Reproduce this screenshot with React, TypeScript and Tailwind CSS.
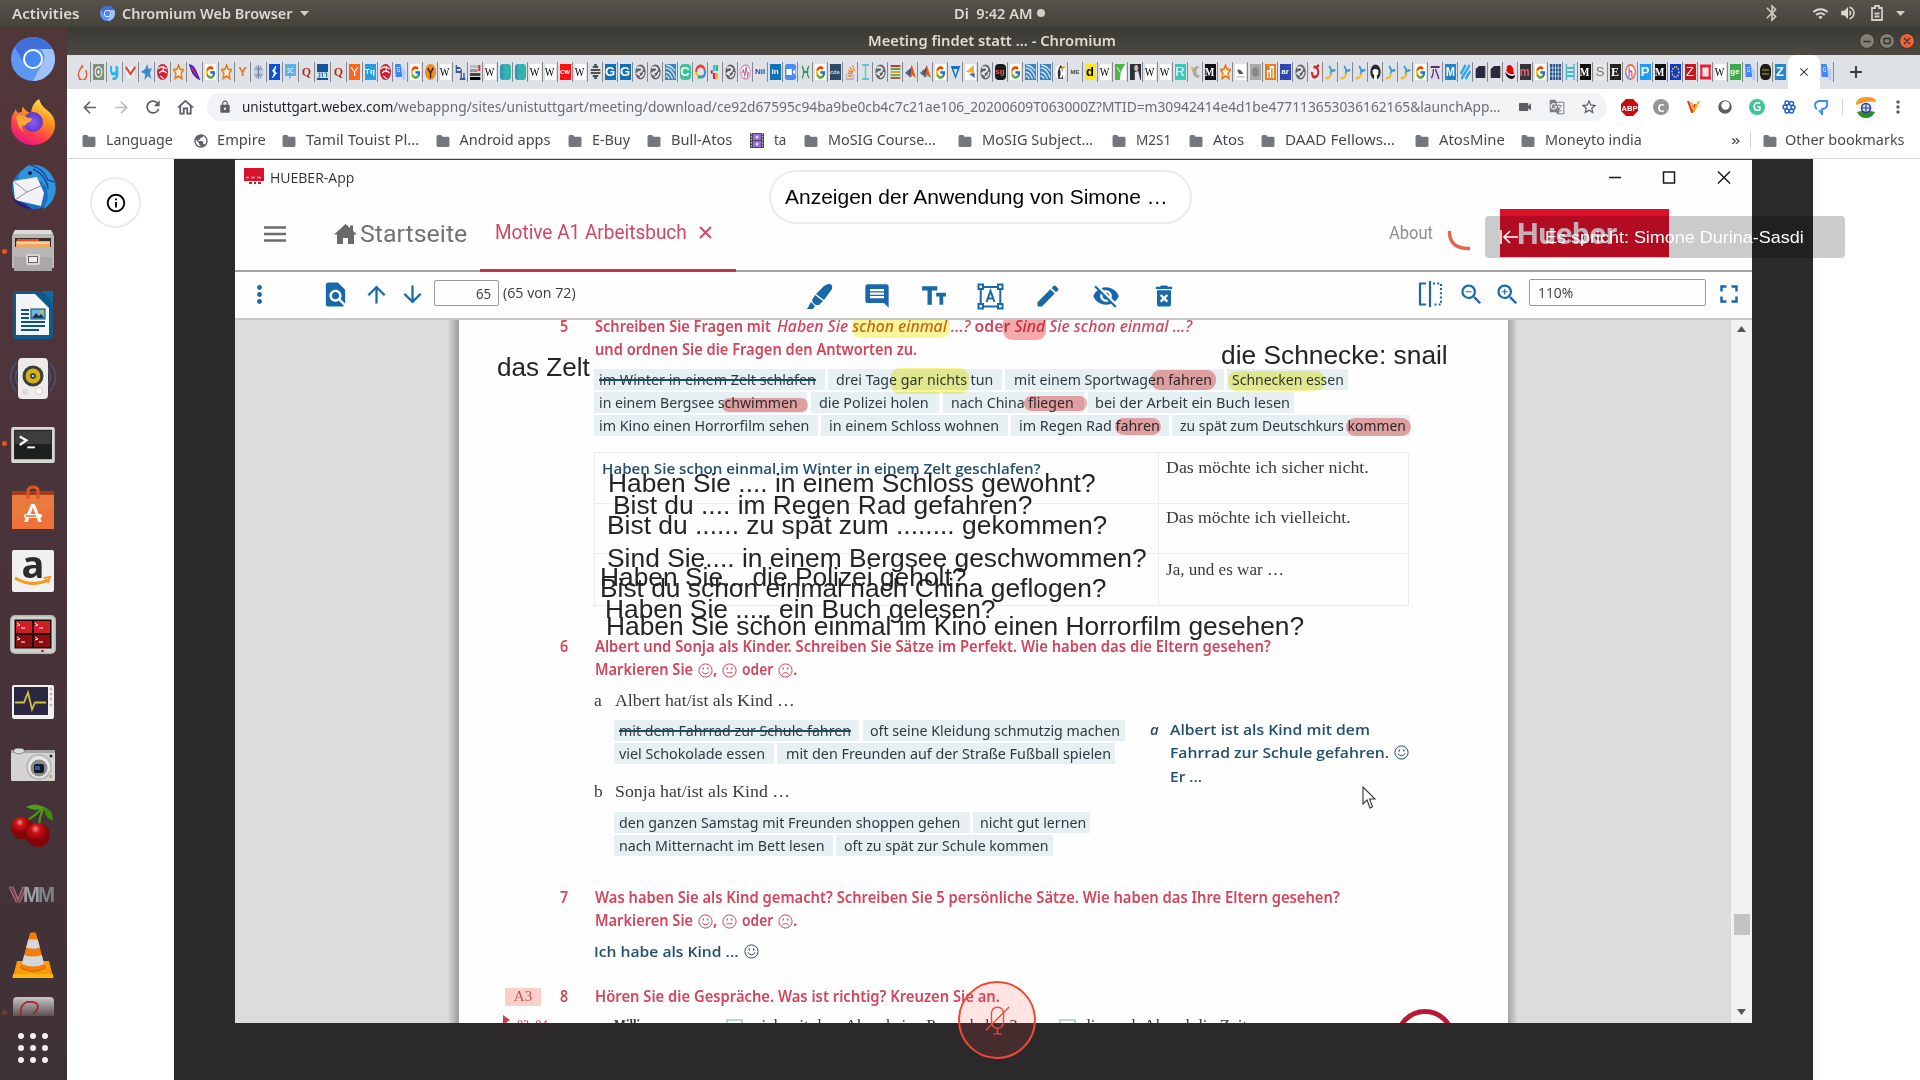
import React, { useLayoutEffect, useRef, useState } from "react";
import {
  MdArrowBack,
  MdArrowForward,
  MdRefresh,
  MdOutlineHome,
  MdLock,
  MdVideocam,
  MdGTranslate,
  MdStarBorder,
  MdMoreVert,
  MdPublic,
  MdFindInPage,
  MdArrowUpward,
  MdArrowDownward,
  MdInsertComment,
  MdEdit,
  MdVisibilityOff,
  MdDeleteForever,
  MdZoomIn,
  MdZoomOut,
  MdFullscreen,
  MdBluetooth,
  MdWifi,
  MdVolumeUp,
  MdInfoOutline,
  MdClose,
} from "react-icons/md";
import { FcGoogle } from "react-icons/fc";

/* Text stretched horizontally so that it fills exactly `w` pixels. */
function Fit({ w, className = "", children }: { w: number; className?: string; children: React.ReactNode }) {
  const ref = useRef<HTMLSpanElement>(null);
  const [k, setK] = useState(1);
  useLayoutEffect(() => {
    if (ref.current) setK(w / ref.current.offsetWidth);
  }, [w]);
  return (
    <span className={`inline-block shrink-0 whitespace-pre ${className}`} style={{ width: w }}>
      <span ref={ref} className="inline-block origin-left whitespace-pre" style={{ transform: `scaleX(${k})` }}>
        {children}
      </span>
    </span>
  );
}

/* ---------- browser tabs ---------- */

const fav: Record<string, React.ReactNode> = {
  torch: <path d="M8 1L4 6a6 6 0 1 0 8.5.3M8 1v3" fill="none" stroke="#ee5a35" strokeWidth="2" />,
  spiral: (<g><rect width="16" height="16" fill="#7f9078" /><circle cx="8" cy="8" r="5" fill="none" stroke="#e9eee4" strokeWidth="1.6" /><circle cx="8" cy="8" r="2" fill="#e9eee4" /></g>),
  ycy: <path d="M3 2v4q0 4 4 4t4-4V2M12 3v7q0 5-7 5" fill="none" stroke="#2ab6ea" strokeWidth="3" />,
  gmail: (<g><rect y="3" width="16" height="11" fill="#eceff1" /><path d="M1 14V4l7 6 7-6v10" fill="none" stroke="#e8c8c5" strokeWidth="1.500" /><path d="M1 3l7 7 7-7" fill="none" stroke="#d9483b" strokeWidth="2.600" /></g>),
  bstar: <path d="M9 0l2 5 5-1-3 5 2 6-5-3-5 4 1-6-6-2 6-3z" fill="#3a8bd6" />,
  redball: (<g><circle cx="8" cy="8" r="8" fill="#d61f35" /><path d="M1 5q6-4 13 0M3 9q5-4 11 0M5 12l5 3M9 2v6" fill="none" stroke="#fff" strokeWidth="1.4" /></g>),
  ostar: <path d="M8 1l2.2 4.2 5 .4-3.400 3.700 1.200 5.200L8 12l-5 2.500 1.200-5.200L.8 5.600l5-.4z" fill="#fff3e0" stroke="#ea7c1c" strokeWidth="2" />,
  feather: <path d="M1 1q6 1 9 6l5 8q-8-3-11-8z" fill="#d01870" stroke="#3b22c8" strokeWidth="1.5" />,
  greyball: (<g><circle cx="8" cy="8" r="7" fill="#c7cede" /><path d="M2 5h12M2 11h12M8 1v14M4 2q8 6 0 12M12 2q-8 6 0 12" fill="none" stroke="#6f82a8" strokeWidth="1" /></g>),
  bdiamond: (<g><rect width="16" height="16" fill="#0d4fd6" /><path d="M10 2L5 7l3 2-3 5 6-5-3-2z" fill="#fff" stroke="#fff" strokeWidth="1" /></g>),
  sobub: (<g><path d="M0 0h16v12H9l-3 4v-4H0z" fill="#5fb2e6" /><text x="8" y="9" fontSize="8" textAnchor="middle" fill="#fff">SC</text></g>),
  spar: (<g><rect width="16" height="16" fill="#11579c" /><rect y="8" width="16" height="6" fill="#cfe0f0" /><path d="M2 9h2v4H2M6 9h2v4M11 9h3v4" stroke="#11579c" fill="none" /></g>),
  trans: (<g><path d="M0 0h8l4 13H1z" fill="#4285f4" /><path d="M9 5h6v11h-4z" fill="#b9cdf2" /><text x="5" y="8" fontSize="7" textAnchor="middle" fill="#fff">G</text></g>),
  oface: (<g><circle cx="8" cy="8" r="8" fill="#ef8a24" /><path d="M4 4l4 5 4-5M8 9v5" fill="none" stroke="#222" strokeWidth="2" /></g>),
  blue2: (<g><path d="M2 1v7h6M2 4h6M9 5v10M13 9v6M7 15h8" fill="none" stroke="#335b99" strokeWidth="2" /></g>),
  stack: (<g><rect y="1" width="15" height="3" fill="#bbb" /><rect y="5" width="11" height="3" fill="#999" /><rect y="9" width="15" height="3" fill="#444" /><rect y="13" width="15" height="3" fill="#000" /><rect x="12" y="1" width="3" height="6" fill="#e33" /></g>),
  teal: (<g><rect width="8" height="16" rx="4" fill="#2d96c9" /><rect x="4" width="12" height="16" rx="4" fill="#34b4a8" /></g>),
  print: <path d="M4 3h8M1 6h14M1 9h14M4 12h8M6 14h4M6 1h4" stroke="#222" strokeWidth="1.6" />,
  globe: (<g><circle cx="8" cy="8" r="7.500" fill="#60646a" /><path d="M3 4q5-2 8 1-2 4-7 3M13 8q-1 5-6 5M2 9l5 2" fill="none" stroke="#e8eaed" strokeWidth="2" /></g>),
  wave: (<g><rect width="16" height="16" fill="#3c83c6" /><path d="M1 4q9 0 14 10M1 8q6 0 10 7M2 1q8 1 13 6M1 12q4 0 5 3" fill="none" stroke="#d8e9f8" strokeWidth="1.500" /></g>),
  cloud: (<g><path d="M2 8a6 5 0 0 1 12-2" fill="none" stroke="#ea4335" strokeWidth="3" /><path d="M14 6q2 6-4 7" fill="none" stroke="#4285f4" strokeWidth="3" /><path d="M10 13H4" stroke="#34a853" strokeWidth="3" /><path d="M3 12L2 8" stroke="#fbbc05" strokeWidth="3" /></g>),
  slack: (<g><path d="M6 1v6" stroke="#36c5f0" strokeWidth="3.500" /><path d="M10 1v6" stroke="#2eb67d" strokeWidth="3.500" /><path d="M10 9v6" stroke="#ecb22e" strokeWidth="3.500" /><path d="M6 9v6M1 8h3" stroke="#e01e5a" strokeWidth="3.500" /></g>),
  pink: (<g><circle cx="8" cy="8" r="7" fill="#fff" stroke="#d48cb0" strokeWidth="1.500" /><path d="M3 9l2-3 2 6 2-9 2 9 2-4" fill="none" stroke="#c2679a" strokeWidth="1.500" /></g>),
  zoom: (<g><rect width="16" height="16" rx="3" fill="#4a8cff" /><path d="M2 5h8v6H2zM11 8l4-3v6z" fill="#fff" /></g>),
  dna: <path d="M3 2q5 6 0 12M13 2q-5 6 0 12M4 8h8" fill="none" stroke="#3f9a52" strokeWidth="2" />,
  so: (<g><path d="M2 10v5h10v-5" fill="none" stroke="#aaa" strokeWidth="1.500" /><path d="M4 12h6M4 9l6 1M5 6l6 3M7 3l5 5M11 1l3 6" stroke="#f08026" strokeWidth="1.500" /></g>),
  lines: <g><path d="M1 2h14" stroke="#c33" strokeWidth="2" /><path d="M1 5h14" stroke="#4a5" strokeWidth="2" /><path d="M1 8h14" stroke="#e8a030" strokeWidth="2" /><path d="M1 11h14" stroke="#7a5" strokeWidth="2" /><path d="M1 14h14" stroke="#963" strokeWidth="2" /></g>,
  matlab: (<g><path d="M0 9l6-4 4 8-3 0z" fill="#2878b8" /><path d="M10 1l6 13-6-3-4 3z" fill="#dd5d1c" /><path d="M10 1l-4 6 1 5z" fill="#7a2010" /></g>),
  vblue: <path d="M1 2h14L8 15zM5 5h6l-3 6z" fill="#1971c2" fillRule="evenodd" />,
  otri: (<g><rect width="16" height="16" fill="#fff" /><path d="M1 8l12-7v8z" fill="#f4a640" /><path d="M6 10l8 4V9z" fill="#3b69b0" /></g>),
  peng: (<g><circle cx="8" cy="8" r="7.500" fill="#fff" /><path d="M5 15q-3-8 3-14 5 2 2 8l2 6" fill="#333" /><path d="M8 4q3 6 0 10" stroke="#fff" strokeWidth="2.500" fill="none" /><path d="M10 4l4-1" stroke="#e90" strokeWidth="2" /></g>),
  leaf: (<g><rect width="16" height="16" fill="#4eb648" /><path d="M8 16Q8 6 16 0v16zM3 3l5 6" fill="#fff" stroke="#fff" /></g>),
  photo: (<g><rect width="16" height="16" fill="#2c2f3a" /><circle cx="9" cy="4" r="3" fill="#d9b59a" /><path d="M7 16V8l5-1 3 9z" fill="#dfe3ea" /></g>),
  kite: (<g><path d="M1 2l7 3-2 8z" fill="#f0a830" /><path d="M14 3a6 6 0 1 0 1 9l-5-2q-2-5 4-7z" fill="#aaa" /></g>),
  bird: (<g><rect width="16" height="16" fill="#fff" /><path d="M3 6q5-2 9 4l-6 0z" fill="#555" /><path d="M2 13h12" stroke="#999" /></g>),
  blur: (<g><rect width="16" height="16" fill="#aaa" /><circle cx="8" cy="8" r="5" fill="#888" /></g>),
  obars: (<g><rect width="16" height="16" fill="#f17c12" /><path d="M4 14V7h4v7M8 7V3h4v11" fill="none" stroke="#fff" strokeWidth="2" /></g>),
  redo: (<g><rect width="16" height="16" fill="#fff" opacity=".3" /><path d="M5 3h2a5 5 0 0 1 0 10H5a4 5 0 0 1-2-5M10 3l3-2" fill="none" stroke="#e0202f" strokeWidth="3" /></g>),
  run: (<g><path d="M6 2l4 5 5-1M9 6l-1 4" stroke="#35a0d8" strokeWidth="2.500" fill="none" /><path d="M1 14q6 1 9-5" stroke="#f4b92c" strokeWidth="2.500" fill="none" /></g>),
  cat: (<g><circle cx="8" cy="8" r="7.500" fill="#24292e" /><path d="M4 6q4-2 8 0 1 6-2 5v5H6v-5Q3 10 4 6z" fill="#fff" /></g>),
  pi: (<g><rect width="16" height="16" fill="#dde" /><path d="M1 3h13M5 5q0 6-3 9M8 5l5 10" stroke="#536" strokeWidth="1.800" fill="none" /></g>),
  stripes: <path d="M1 10L8 1M2 15L14 1M8 15l7-8" stroke="#2aa5ee" strokeWidth="3" />,
  folder: <path d="M1 5l5-3h9v12H1z" fill="#2e2740" />,
  hat: (<g><path d="M3 2q6-3 9 3l1 5q-7 1-11-3z" fill="#e00" /><path d="M0 8q8 6 15 3-1 4-6 4-7-1-9-7z" fill="#111" /></g>),
  grid: (<g><rect width="16" height="16" fill="#27528c" /><path d="M0 4h16M0 8h16M0 12h16M4 0v16M8 0v16M12 0v16" stroke="#c9d7ea" strokeWidth="1" /></g>),
  ladder: <path d="M2 0v16M13 0v16M2 4h11M2 8h11M2 12h11" stroke="#41b8cb" strokeWidth="2" />,
  hcol: (<g><circle cx="8" cy="8" r="7" fill="#fff" stroke="#ee6a3c" strokeWidth="1.800" /><path d="M1 8a7 7 0 0 0 7 7" stroke="#5aa8dd" strokeWidth="2" fill="none" /><path d="M6 4v9M6 8q4-2 4 1v4" stroke="#e0529c" strokeWidth="2" fill="none" /></g>),
  eu: (<g><rect width="16" height="16" fill="#1236d8" /><circle cx="8" cy="8" r="5" fill="none" stroke="#ffe21a" strokeWidth="2" strokeDasharray="1.500 1.500" /></g>),
  redbar: (<g><rect width="16" height="16" fill="#f6dfe2" /><path d="M0 2h16M0 14h16M2 2v12M14 2v12" stroke="#dd2338" strokeWidth="3" /></g>),
  blackr: (<g><rect width="16" height="16" rx="6" fill="#1d1d1b" /><path d="M3 6h10M3 10h10" stroke="#8a7b2a" strokeWidth="1.500" /></g>),
  istar: <path d="M3 1h10M8 1v14M3 15h10" stroke="#5ec7d2" strokeWidth="2" fill="none" />,
};

type Letter = [string, string, string];
const letters: Record<string, Letter> = {
  W: ["W", "bg-white text-black", "serif"],
  Q: ["Q", "text-[#b0301f] font-bold", "serif"],
  Yo: ["Y", "text-[#f2731d] font-bold", "sans"],
  Yb: ["Y", "bg-[#fb651e] text-white", "sans"],
  Tq: ["Tq", "bg-[#26a0e2] text-white font-bold", "small"],
  CW: ["CW", "bg-[#f11] text-white font-bold", "tiny"],
  Gb: ["G", "bg-[#1470b5] text-white font-bold", "sans"],
  C: ["C", "bg-[#3fc49a] text-white font-bold rounded-sm", "sans"],
  Nil: ["Nil", "text-[#1c54a0] font-bold", "small"],
  in: ["in", "bg-[#0a74b6] text-white font-bold", "small"],
  cds: ["cds", "bg-[#2c4a68] text-white", "tiny"],
  sg: ["sg", "bg-[#1c1c1c] text-[#f55] font-bold rounded-sm", "small"],
  ME: ["ME", "text-[#444] font-bold", "tiny"],
  d: ["d", "bg-[#fde81a] text-black font-bold", "sans"],
  R: ["R", "bg-[#3cc8b4] text-white", "sans"],
  M: ["M", "bg-[#111] text-white font-bold", "serif"],
  ar: ["ar", "bg-[#2c47b0] text-white font-bold", "small"],
  Mb: ["M", "bg-[#2384cc] text-white font-bold", "sans"],
  m: ["m", "bg-[#33333b] text-[#f0606c] font-bold", "sans"],
  S: ["S", "bg-[#e6e6e6] text-[#777]", "sans"],
  E: ["E", "bg-[#222] text-white font-bold", "serif"],
  P: ["P", "bg-[#1f9bf5] text-white font-bold", "sans"],
  Zr: ["Z", "bg-[#c9151b] text-white", "sans"],
  ge: ["ge", "bg-[#3cab44] text-white font-bold", "small"],
  Zb: ["Z", "bg-[#2787cc] text-white font-bold", "sans"],
};

const tabs =
  "torch spiral ycy gmail bstar redball ostar feather G ostar Yo greyball bdiamond sobub Q spar Q Yb Tq redball trans G oface W blue2 stack W teal teal W W CW W print Gb Gb globe globe wave C cloud slack globe pink Nil in zoom dna G cds so istar globe lines matlab matlab G vblue otri globe sg G wave wave peng ME d W leaf photo W W R kite M ostar bird blur obars ar globe redo run run run cat run run G pi Mb stripes folder folder hat m G grid ladder M S E hcol P M eu Zr redbar W ge trans blackr Zb".split(" ");

function Favicon({ k }: { k: string }) {
  if (k === "G")
    return (
      <span className="flex h-4 w-[11px] items-center justify-center overflow-hidden bg-white">
        <FcGoogle className="h-[15px] w-[11px]" preserveAspectRatio="none" />
      </span>
    );
  if (letters[k]) {
    const [t, c, f] = letters[k];
    const font =
      f === "serif"
        ? "font-['Liberation_Serif',serif] text-[12px] leading-4"
        : f === "tiny"
          ? "font-['Liberation_Sans',sans-serif] text-[6px] leading-4"
          : f === "small"
            ? "font-['Liberation_Sans',sans-serif] text-[8px] leading-4"
            : "font-['Liberation_Sans',sans-serif] text-[13px] leading-4";
    return (
      <span className={`flex h-4 w-[11px] items-center justify-center ${c} ${font}`}>
        <span className={t === "W" || t === "M" || t === "m" ? "scale-x-85" : ""}>{t}</span>
      </span>
    );
  }
  return (
    <svg className="h-4 w-[11px]" viewBox="0 0 16 16" preserveAspectRatio="none">
      {fav[k]}
    </svg>
  );
}

function TabStrip() {
  return (
    <div className="flex h-[34px] items-center bg-[#dee1e6] pl-[8px]">
      {tabs.map((k, i) => (
        <div
          key={i}
          className={`flex h-5 shrink-0 items-center justify-center border-r ${i < 18 ? "w-4" : "w-[15px]"} ${i === tabs.length - 1 ? "border-transparent" : "border-[#85888d]"}`}
        >
          <Favicon k={k} />
        </div>
      ))}
      <div className="flex h-full w-[32px] shrink-0 items-center justify-center rounded-t-lg bg-white">
        <MdClose className="size-[14px] text-[#3c4043]" />
      </div>
      <div className="flex h-5 w-[14px] items-center justify-center border-r border-[#85888d]">
        <Favicon k="trans" />
      </div>
      <svg className="ml-[15px] size-[14px]" viewBox="0 0 14 14">
        <path d="M7 1v12M1 7h12" stroke="#3c4043" strokeWidth="2" />
      </svg>
    </div>
  );
}

function ChromiumLogo({ className = "" }: { className?: string }) {
  return (
    <svg className={className} viewBox="0 0 44 44">
      <circle cx="22" cy="22" r="22" fill="#5e97f6" />
      <path d="M3.500 10A22 22 0 0 1 41.500 12H22a10 10 0 0 0-9 14z" fill="#3f6fd8" />
      <path d="M41.500 12A22 22 0 0 1 22 44l9-17a10 10 0 0 0-2-15z" fill="#a1c2fa" />
      <circle cx="22" cy="22" r="10" fill="#fff" />
      <circle cx="22" cy="22" r="8" fill="#4688f1" />
    </svg>
  );
}

/* ---------- toolbar ---------- */

function Slot({ children }: { children: React.ReactNode }) {
  return <div className="flex w-8 shrink-0 items-center justify-center">{children}</div>;
}

function AddressRow() {
  return (
    <div className="flex h-9 items-center bg-white pl-[6px] text-[#5a5d61]">
      <Slot><MdArrowBack className="size-[19px]" /></Slot>
      <Slot><MdArrowForward className="size-[19px] text-[#b9babc]" /></Slot>
      <Slot><MdRefresh className="size-[20px]" /></Slot>
      <Slot><MdOutlineHome className="size-[21px]" /></Slot>
      <div className="ml-[6px] flex h-7 w-[1400px] items-center rounded-full bg-[#f1f3f4] pl-[11px]">
        <MdLock className="size-[14px]" />
        <div className="mb-[2px] ml-[10px] flex text-[15px]">
          <Fit w={151} className="text-[#1f2124]">unistuttgart.webex.com</Fit>
          <Fit w={1107} className="text-[#6a6d71]">/webappng/sites/unistuttgart/meeting/download/ce92d67595c94ba9be0cb4c7c21ae106_20200609T063000Z?MTID=m30942414e4d1be477113653036162165&amp;launchApp…</Fit>
        </div>
        <div className="ml-[9px] flex">
          <Slot><MdVideocam className="size-[16px]" /></Slot>
          <Slot><MdGTranslate className="size-[16px] text-[#7b7e82]" /></Slot>
          <Slot><MdStarBorder className="size-[18px]" /></Slot>
        </div>
      </div>
      <div className="ml-[6px] flex items-center">
        <Slot>
          <svg className="size-[17px]" viewBox="0 0 17 17">
            <path d="M5 0h7l5 5v7l-5 5H5l-5-5V5z" fill="#c70d0d" />
            <text x="8.500" y="11.500" fontSize="7.500" fontWeight="bold" textAnchor="middle" fill="#fff" fontFamily="Liberation Sans">ABP</text>
          </svg>
        </Slot>
        <Slot><span className="flex size-[16px] items-center justify-center rounded-full bg-[#959595] text-[11px] font-bold leading-none text-white">C</span></Slot>
        <Slot>
          <svg className="h-[12px] w-[13px]" viewBox="0 0 13 12"><path d="M1 0l4 11L8 3" fill="none" stroke="#d8342a" strokeWidth="2" /><path d="M4 1l3 9 5-10" fill="none" stroke="#f2a922" strokeWidth="2" /></svg>
        </Slot>
        <Slot>
          <svg className="size-[14px]" viewBox="0 0 14 14"><circle cx="7" cy="7" r="6" fill="#5c5e60" stroke="#5c5e60" strokeWidth="1.500" /><circle cx="7.500" cy="5.500" r="4.200" fill="#fff" /></svg>
        </Slot>
        <Slot><span className="flex size-[16px] items-center justify-center rounded-full bg-[#3fc49a] text-[12px] font-semibold leading-none text-white">G</span></Slot>
        <Slot>
          <svg className="size-[14px]" viewBox="0 0 14 14" fill="none" stroke="#2264b8" strokeWidth="1.500"><circle cx="5" cy="3" r="2" /><circle cx="9.500" cy="3.500" r="2" /><circle cx="3" cy="7" r="2" /><circle cx="11" cy="7.500" r="2" /><circle cx="5" cy="11" r="2" /><circle cx="9.500" cy="11" r="2" /></svg>
        </Slot>
        <Slot>
          <svg className="h-[15px] w-[14px]" viewBox="0 0 14 15" fill="none" stroke="#3c92f0" strokeWidth="2"><path d="M3 9Q1 8 1 5t4-4h8v5q-1 3-5 3v5L5 10" /></svg>
        </Slot>
      </div>
      <div className="ml-[5px] h-4 w-px bg-[#cfd1d4]" />
      <svg className="ml-[12px] size-[22px]" viewBox="0 0 22 22">
        <circle cx="11" cy="11" r="10" fill="#f4f4f4" />
        <path d="M1 9Q1 1 11 1t10 5q-9-2-20 3z" fill="#f59a23" />
        <path d="M2 16q9-3 18 0-3 6-9 6t-9-6z" fill="#2f8b2c" />
        <circle cx="11" cy="12" r="4.500" fill="#d7dcf0" stroke="#2b3f94" strokeWidth="1.600" />
        <path d="M11 8v8M7 12h8" stroke="#2b3f94" />
      </svg>
      <MdMoreVert className="ml-[11px] size-[20px]" />
    </div>
  );
}

type Bm = [string, number, number, string?];
const bookmarks: Bm[] = [
  ["Language", 67, 111, "folder"],
  ["Empire", 48.5, 89, "globe"],
  ["Tamil Touist Pl…", 113, 154],
  ["Android apps", 91, 132],
  ["E-Buy", 38.5, 79],
  ["Bull-Atos", 61.5, 103],
  ["ta", 12, 54, "film"],
  ["MoSIG Course…", 108, 154],
  ["MoSIG Subject…", 111.5, 154],
  ["M2S1", 35.5, 77],
  ["Atos", 31, 72],
  ["DAAD Fellows…", 110.5, 154],
  ["AtosMine", 65.5, 106],
  ["Moneyto india", 96.5, 208],
];

function BmIcon({ k }: { k?: string }) {
  if (k === "globe") return <MdPublic className="size-[16px] text-[#5f6368]" />;
  if (k === "film")
    return (
      <svg className="h-[15px] w-[14px]" viewBox="0 0 14 15"><rect width="14" height="15" fill="#4a4a52" /><path d="M1.500 0v15M12.500 0v15" stroke="#ccc" strokeDasharray="1.500 1.500" /><rect x="3" y="1" width="8" height="6" fill="#9a6be0" /><rect x="3" y="8" width="8" height="6" fill="#9a6be0" /><circle cx="7" cy="4" r="1.500" fill="#e6d8ff" /><circle cx="7" cy="11" r="1.500" fill="#e6d8ff" /></svg>
    );
  return (
    <svg className="h-[12px] w-[14px]" viewBox="0 0 14 13"><path d="M0 2q0-2 1.500-2H5l1.500 2H12.500Q14 2 14 3.500v8Q14 13 12.500 13h-11Q0 13 0 11.500z" fill="#74777b" /></svg>
  );
}

function BookmarkBar() {
  return (
    <div className="flex h-[34px] items-center border-b border-[#d9dadd] bg-white pb-[4px] pl-[15px] text-[14.5px] text-[#46494d]">
      {bookmarks.map(([t, w, total, k]) => (
        <div key={t} className="flex shrink-0 items-center" style={{ width: total }}>
          <div className="flex w-[23.5px] shrink-0 items-center pt-[2px]"><BmIcon k={k} /></div>
          <Fit w={w}>{t}</Fit>
        </div>
      ))}
      <Fit w={9} className="ml-[2px]">»</Fit>
      <div className="ml-[10px] h-4 w-px bg-[#cfd1d4]" />
      <div className="ml-[12px] mr-[8px] pt-[2px]"><BmIcon /></div>
      <Fit w={119.5}>Other bookmarks</Fit>
    </div>
  );
}

/* ---------- dock ---------- */

const dock: { svg: React.ReactNode; on?: boolean }[] = [
  { svg: <ChromiumLogo className="size-11" /> },
  {
    svg: (
      <svg className="-mt-[2px] h-[46px] w-[46px]" viewBox="0 0 46 46">
        <defs>
          <linearGradient id="ff" x1=".8" y1="0" x2=".3" y2="1"><stop offset="0" stopColor="#fff14f" /><stop offset=".4" stopColor="#ff9020" /><stop offset=".75" stopColor="#ff3750" /><stop offset="1" stopColor="#e3158b" /></linearGradient>
          <radialGradient id="ffp"><stop offset="0" stopColor="#9059ff" /><stop offset="1" stopColor="#5b3cc4" /></radialGradient>
        </defs>
        <path d="M29 0q2 7 8 11 8 6 8 15a22 20 0 0 1-44 0Q1 16 5 12v-2l3 4q2-1 4-1-1-3 1-5 3 5 8 6Q22 4 29 0z" fill="url(#ff)" />
        <circle cx="23" cy="23" r="10" fill="url(#ffp)" />
        <path d="M6 17q6-3 12 2 4 0 4 1-1 3-5 4-1 4-5 2-1 8 8 10Q8 34 6 17z" fill="#ffa436" />
      </svg>
    ),
  },
  {
    svg: (
      <svg className="size-12" viewBox="0 0 48 48">
        <ellipse cx="25" cy="25" rx="22" ry="21" fill="#1d6fc4" />
        <path d="M9 24Q6 10 20 2q14-2 22 9 6 10 4 20-3 11-12 15 8-12 3-22-8-11-22-8-5 2-6 8z" fill="#2f93dd" />
        <path d="M21 2q13 3 18 15l6 2M24 6q14 7 15 20" fill="none" stroke="#1a4f9c" strokeWidth="1.500" />
        <path d="M4 18l24-4 7 16-3 13L6 37z" fill="#f3f3f5" />
        <path d="M4 18l14 11 16-7M18 29L6 37" fill="none" stroke="#777" strokeWidth=".8" />
        <path d="M3 33q5 13 20 13l-7-5-9-4z" fill="#2b1e77" />
        <circle cx="21" cy="10" r="2" fill="#124" />
      </svg>
    ),
  },
  {
    on: true,
    svg: (
      <svg className="h-[44px] w-[44px]" viewBox="0 0 44 44">
        <path d="M4 1h36l3 6v32H1V7z" fill="#b9b8b6" />
        <path d="M4 1h36l2 4H2z" fill="#dcdbd9" />
        <rect x="4" y="9" width="36" height="9" fill="#3a2a24" />
        <path d="M6 10h22v3H6z" fill="#d9541e" /><rect x="5" y="12" width="34" height="6" fill="#f0a860" /><path d="M6 14h32" stroke="#fff4e0" />
        <path d="M3 18h38v24H3z" fill="#a9a8a6" /><path d="M3 18h38v10H3z" fill="#b8b7b5" />
        <rect x="15" y="25" width="14" height="11" rx="2" fill="#d8d7d5" /><rect x="17.500" y="27.500" width="9" height="6" fill="#eee" stroke="#666" />
      </svg>
    ),
  },
  {
    svg: (
      <svg className="h-[48px] w-[40px]" viewBox="0 0 40 48">
        <path d="M2 0h24l14 12v33q0 3-3 3H3q-3 0-3-3V2q0-2 2-2z" fill="#0e5a8a" />
        <path d="M28 0h12v12z" fill="#0a6aa8" /><path d="M3 3h19l14 14v27H3z" fill="#f4f4f4" />
        <path d="M8 19h8M8 23h8M8 27h8M8 31h24M8 35h24M8 39h18" stroke="#0b5582" strokeWidth="2" />
        <rect x="18" y="18" width="14" height="10" fill="#6db7e8" stroke="#0b4a72" /><path d="M19 27l4-5 3 3 2-2 3 4z" fill="#263238" /><circle cx="29" cy="20.500" r="1.500" fill="#f5b800" />
      </svg>
    ),
  },
  {
    svg: (
      <svg className="h-[44px] w-[50px]" viewBox="0 0 50 44">
        <path d="M8 6Q-3 20 8 34M12 9Q3 20 12 31M42 6q11 14 0 28M38 9q9 11 0 22" fill="none" stroke="#4a5a88" strokeWidth="1.500" opacity=".8" />
        <path d="M14 1h22q4 0 4 5v32q0 4-4 4H14q-4 0-4-4V6q0-5 4-5z" fill="#ecebe8" />
        <circle cx="25" cy="19" r="10.500" fill="#3c3c3a" /><circle cx="25" cy="19" r="7.500" fill="#d2b416" /><circle cx="25" cy="19" r="3" fill="#44474a" /><circle cx="25" cy="19" r="1" fill="#eee" />
        <circle cx="31" cy="34" r="3.500" fill="#fff" stroke="#ccc" /><rect x="15" y="33" width="4" height="4" fill="#e0dfdb" stroke="#d0cfcb" />
      </svg>
    ),
  },
  {
    on: true,
    svg: (
      <svg className="mt-[3px] h-[36px] w-[46px]" viewBox="0 0 46 38">
        <rect width="46" height="38" rx="2" fill="#d8d7d4" /><rect x="3" y="3" width="40" height="31" fill="#1e1f1f" /><rect x="4" y="4" width="38" height="14" fill="#4a4b4a" opacity=".7" />
        <path d="M9 10l7 4-7 5" fill="none" stroke="#fff" strokeWidth="2.500" /><path d="M17 21.500h8" stroke="#fff" strokeWidth="2" />
      </svg>
    ),
  },
  {
    svg: (
      <svg className="h-[44px] w-[42px]" viewBox="0 0 42 44">
        <path d="M0 6h42v8H0z" fill="#a53c17" /><path d="M0 10h42v34H0z" fill="#ee733a" /><path d="M0 10h42v12L0 34z" fill="#e87f42" opacity=".7" />
        <path d="M16 14V6q0-4 5-4t5 4v8" fill="none" stroke="#dd5426" strokeWidth="3" />
        <text x="21" y="37" fontSize="25" fontWeight="bold" textAnchor="middle" fill="#fff" fontFamily="Lato">A</text>
        <rect x="12" y="29" width="18" height="4" rx="2" fill="#fff" /><rect x="14" y="30.200" width="10" height="1.600" fill="#ee733a" />
      </svg>
    ),
  },
  {
    svg: (
      <svg className="size-[42px]" viewBox="0 0 42 42">
        <rect width="42" height="42" rx="2" fill="#f0f0f0" />
        <text x="21" y="28" fontSize="38" fontWeight="bold" textAnchor="middle" fill="#2c2c2c" fontFamily="Open Sans">a</text>
        <path d="M3 28q17 10 33 2" fill="none" stroke="#f7981d" strokeWidth="3" /><path d="M32 28l6-1-2 6" fill="none" stroke="#f7981d" strokeWidth="2" />
      </svg>
    ),
  },
  {
    svg: (
      <svg className="h-[40px] w-[46px]" viewBox="0 0 46 40">
        <rect width="46" height="39" rx="5" fill="#b5b9b2" /><rect x="1.500" y="1.500" width="43" height="36" rx="4" fill="#d0d3cd" /><rect x="4.500" y="4.500" width="37" height="29" fill="#1a0a0a" />
        <path d="M6 6h16v12H6zM24 6h16v12H24z" fill="#cf1f24" /><path d="M6 20h16v12H6zM24 20h16v12H24z" fill="#8c0d10" />
        <path d="M7 8l3 2-3 1M11 13h4M25 8l3 2-3 1M29 13h4M7 22l3 2-3 1M11 27h4M25 22l3 2-3 1M29 27h4" fill="none" stroke="#fff" strokeWidth="1" />
        <rect x="31" y="35" width="3" height="2" fill="#e22" />
      </svg>
    ),
  },
  {
    svg: (
      <svg className="mt-[6px] h-[34px] w-[42px]" viewBox="0 0 42 34">
        <rect width="42" height="34" rx="2" fill="#f3f1ee" /><rect x="2" y="2" width="34" height="28" fill="#2b2740" />
        <path d="M3 17.500h9l4-10 4 17 3-7h11" fill="none" stroke="#c8c23e" strokeWidth="1.800" />
        <circle cx="39" cy="4" r="1.500" fill="#bbb" /><circle cx="39" cy="9" r="1.500" fill="#bbb" /><circle cx="39" cy="14" r="1.500" fill="#bbb" /><circle cx="39" cy="20" r="1.500" fill="#bbb" />
      </svg>
    ),
  },
  {
    svg: (
      <svg className="mt-[2px] h-[33px] w-[44px]" viewBox="0 0 44 33">
        <rect y="2" width="44" height="31" rx="1.500" fill="#d4d4d3" /><rect y="2" width="44" height="3" fill="#a5a5a4" />
        <ellipse cx="8" cy="3" rx="5.500" ry="2.800" fill="#ddd" stroke="#888" />
        <circle cx="28" cy="19" r="13" fill="#b9b9b9" /><circle cx="28" cy="19" r="11" fill="#e8e8e8" /><circle cx="28" cy="20" r="8.500" fill="#8b8b8d" /><rect x="23" y="16" width="10" height="9" rx="2" fill="#14171f" /><rect x="24" y="18" width="5" height="4" fill="#2458a8" />
        <circle cx="40" cy="8" r="1.500" fill="#222" /><rect x="38" y="27" width="3" height="3" fill="#f2a43a" />
      </svg>
    ),
  },
  {
    svg: (
      <svg className="-mt-[2px] h-[44px] w-[44px]" viewBox="0 0 44 44">
        <defs><radialGradient id="ch" cx=".4" cy=".25"><stop offset="0" stopColor="#f38a8a" /><stop offset=".35" stopColor="#cf1218" /><stop offset="1" stopColor="#850407" /></radialGradient></defs>
        <path d="M14 18Q24 12 33 3M28 24q0-12 5-20" fill="none" stroke="#4c9a14" strokeWidth="2.200" />
        <path d="M15 3q9-5 18 0-7 6-18 0z" fill="#4f9f18" /><path d="M33 3q9 2 9 14-9-3-9-14z" fill="#3f8a10" />
        <circle cx="11" cy="24" r="11" fill="url(#ch)" /><circle cx="27" cy="31" r="12" fill="url(#ch)" />
      </svg>
    ),
  },
  {
    svg: (
      <svg className="mt-1 h-[26px] w-[48px]" viewBox="0 -3 48 26" fontFamily="Liberation Sans" fontWeight="bold" fontSize="22">
        <text x="0" y="19" fill="#8f3a4c" stroke="#9c8f94" strokeWidth=".7" textLength="18" lengthAdjust="spacingAndGlyphs">V</text>
        <text x="14" y="19" fill="#9aa0a3" textLength="17" lengthAdjust="spacingAndGlyphs">M</text>
        <text x="29" y="19" fill="#7d8386" textLength="17" lengthAdjust="spacingAndGlyphs">M</text>
      </svg>
    ),
  },
  {
    svg: (
      <svg className="h-[46px] w-[42px]" viewBox="0 0 42 46">
        <path d="M5 29h32l4 16H1z" fill="#fb9a0b" /><path d="M1 42h40l.5 4H.5z" fill="#fdb415" /><path d="M8 36q13 8 26 0l-2-5H10z" fill="#e06d00" />
        <path d="M18 1q3-1.500 6 0l9 34q-12 7-24 0z" fill="#f57e0a" />
        <path d="M16.300 7.500h9.400l2.200 8q-7 2.500-13.800 0zM12.200 23q9 3 17.600 0l2.400 9q-11 5-22.400 0z" fill="#d3d7da" />
      </svg>
    ),
  },
];

function Dock() {
  return (
    <div className="flex h-[1053px] w-[67px] shrink-0 flex-col bg-linear-to-b from-[#523739] via-[#4a333b] to-[#3f3236]">
      {dock.map((d, i) => (
        <div key={i} className="flex h-16 shrink-0 items-center">
          <span className={`ml-[2px] size-[5px] rounded-full ${d.on ? "bg-[#e95420]" : ""}`} />
          <div className="flex w-[52px] items-center justify-center">{d.svg}</div>
        </div>
      ))}
      <div className="flex h-[29px] items-end">
        <span className="mb-px ml-[2px] size-[5px] rounded-full bg-[#6d3a31]" />
        <svg className="ml-[6px] h-[19px] w-[41px]" viewBox="0 0 41 19">
          <defs><linearGradient id="fade" x1="0" y1="0" x2="0" y2="1"><stop offset="0" stopColor="#c9c6c6" /><stop offset="1" stopColor="#5d5052" /></linearGradient></defs>
          <path d="M0 19V4q0-4 4-4h33q4 0 4 4v15z" fill="url(#fade)" />
          <path d="M8 19Q6 8 14 5q10-1 11 4 0 4-5 8" fill="none" stroke="#9c2830" strokeWidth="1.800" />
        </svg>
      </div>
      <div className="ml-[18px] mt-[17px] grid w-[30px] grid-cols-3 gap-x-[6px] gap-y-[6px]">
        {Array.from({ length: 9 }, (_, i) => (
          <span key={i} className="size-[6px] rounded-full bg-[#f2f0f0]" />
        ))}
      </div>
    </div>
  );
}

/* ---------- workbook page ---------- */

const serif = "font-['Liberation_Serif',serif]";
const arial = "font-['Liberation_Sans',sans-serif]";

function Face({ mood, className = "" }: { mood: "happy" | "flat" | "sad"; className?: string }) {
  return (
    <svg className={`size-[15px] shrink-0 ${className}`} viewBox="0 0 15 15" fill="none" stroke="currentColor" strokeWidth="1">
      <circle cx="7.500" cy="7.500" r="6.600" />
      <path d="M5.200 4.500v2M9.800 4.500v2" strokeWidth="1.300" />
      {mood === "happy" && <path d="M3.800 8.500q3.700 4.500 7.400 0" />}
      {mood === "flat" && <path d="M4.500 9.800h6" />}
      {mood === "sad" && <path d="M4 11.500q3.500-4 7 0" />}
    </svg>
  );
}

/* One word chip: background width, inset of the text, text width. */
function Chip({ bg, pad, w, strike, children }: { bg: number; pad: number; w: number; strike?: boolean; children: string }) {
  return (
    <div className="flex h-[21px] shrink-0 items-center bg-[#e6eff1] text-[15px] leading-[21px] text-[#2f3a40]" style={{ width: bg, paddingLeft: pad }}>
      <Fit w={w}>
        {strike ? <span className="line-through decoration-[#1f4a60] decoration-2">{children}</span> : children}
      </Fit>
    </div>
  );
}

function Heading({ n, children }: { n: string; children: React.ReactNode }) {
  return (
    <div className="flex text-[16px] font-semibold leading-[23px] text-[#d2455b]">
      <div className="w-[34.5px] shrink-0"><Fit w={8}>{n}</Fit></div>
      <div>{children}</div>
    </div>
  );
}

function MarkLine() {
  return (
    <div className="flex h-[23px] items-center">
      <Fit w={98.5}>Markieren Sie</Fit>
      <Face mood="happy" className="ml-[5px] mt-px" />
      <span className="w-[3px]">,</span>
      <Face mood="flat" className="ml-[6px] mt-px" />
      <Fit w={31} className="ml-[5px]">oder</Fit>
      <Face mood="sad" className="ml-[5px] mt-px" />
      <span>.</span>
    </div>
  );
}

/* Marker strokes: left, top, width, height, relative to the visible page. */
const marks: [number, number, number, number, "y" | "r"][] = [
  [393, -4, 98, 22, "y"],
  [544, -6, 43, 26, "r"],
  [432, 48, 78, 26, "y"],
  [692, 50, 65, 20, "r"],
  [769, 51, 97, 20, "y"],
  [263, 78, 86, 14, "r"],
  [565, 76, 63, 15, "r"],
  [656, 98, 46, 17, "r"],
  [887, 98, 65, 18, "r"],
];

/* Typed notes placed freely on the page: text, left, baseline, width. */
const notes: [string, number, number, number][] = [
  ["das Zelt", 37.5, 56, 93],
  ["die Schnecke: snail", 762, 44, 227],
  ["Haben Sie .... in einem Schloss gewohnt?", 149, 172, 487.5],
  ["Bist du .... im Regen Rad gefahren?", 153.5, 194, 419],
  ["Bist du ...... zu spät zum ........ gekommen?", 147.5, 214, 500],
  ["Sind Sie.... in einem Bergsee geschwommen?", 147.5, 247, 540],
  ["Haben Sie... die Polizei geholt?", 141, 266, 366],
  ["Bist du schon einmal nach China geflogen?", 140.5, 277, 507],
  ["Haben Sie ..... ein Buch gelesen?", 145.5, 298, 391],
  ["Haben Sie schon einmal im Kino einen Horrorfilm gesehen?", 147, 315, 698],
];

const hand = "font-['Open_Sans',sans-serif] font-semibold text-[#23506e] text-[15px] leading-[23px]";

function WorkbookPage() {
  return (
    <div className="relative h-[703px] w-[1049px] shrink-0 overflow-hidden bg-[#fefefe] font-['Noto_Sans',sans-serif]">
      <div className="-mt-[5px] flex flex-col pl-[101px]">
        <Heading n="5">
          <div className="flex">
            <Fit w={176}>Schreiben Sie Fragen mit</Fit>
            <Fit w={415} className="ml-[6px]">
              <i className="font-medium">Haben Sie <span className="text-[#c96a2c]">schon einmal</span> ...?</i> oder <i className="font-medium">Sind Sie schon einmal ...?</i>
            </Fit>
          </div>
          <Fit w={322}>und ordnen Sie die Fragen den Antworten zu.</Fit>
        </Heading>

        <div className="ml-[34px] mt-[8px] flex flex-col gap-[2px]">
          <div className="flex gap-[3px]">
            <Chip bg={231} pad={5} w={217} strike>im Winter in einem Zelt schlafen</Chip>
            <Chip bg={174} pad={8} w={157}>drei Tage gar nichts tun</Chip>
            <Chip bg={219} pad={9} w={198}>mit einem Sportwagen fahren</Chip>
            <Chip bg={121} pad={5} w={112}>Schnecken essen</Chip>
          </div>
          <div className="flex gap-[4px]">
            <Chip bg={213} pad={5} w={199}>in einem Bergsee schwimmen</Chip>
            <Chip bg={128} pad={8} w={110}>die Polizei holen</Chip>
            <Chip bg={141} pad={8} w={123}>nach China fliegen</Chip>
            <Chip bg={206} pad={7} w={195}>bei der Arbeit ein Buch lesen</Chip>
          </div>
          <div className="flex gap-[3px]">
            <Chip bg={224} pad={5} w={210}>im Kino einen Horrorfilm sehen</Chip>
            <Chip bg={187} pad={8} w={170}>in einem Schloss wohnen</Chip>
            <Chip bg={158} pad={8} w={141}>im Regen Rad fahren</Chip>
            <Chip bg={238} pad={8} w={226}>zu spät zum Deutschkurs kommen</Chip>
          </div>
        </div>

        <div className="ml-[34px] mt-[16px] grid h-[154px] w-[815px] grid-cols-[564px_1fr] grid-rows-3 border border-[#e9ecf2]">
          <div className="border-b border-r border-[#e9ecf2] pl-[7px] pt-[3px]">
            <Fit w={439} className={hand}>Haben Sie schon einmal im Winter in einem Zelt geschlafen?</Fit>
          </div>
          <div className={`border-b border-[#e9ecf2] pl-[7px] pt-[2px] text-[17.5px] leading-[24px] text-[#3a3a40] ${serif}`}>
            <Fit w={203}>Das möchte ich sicher nicht.</Fit>
          </div>
          <div className="border-b border-r border-[#e9ecf2]" />
          <div className={`border-b border-[#e9ecf2] pl-[7px] pt-px text-[17.5px] leading-[24px] text-[#3a3a40] ${serif}`}>
            <Fit w={185}>Das möchte ich vielleicht.</Fit>
          </div>
          <div className="border-r border-[#e9ecf2]" />
          <div className={`pl-[7px] pt-[3px] text-[17.5px] leading-[24px] text-[#3a3a40] ${serif}`}>
            <Fit w={118}>Ja, und es war …</Fit>
          </div>
        </div>

        <div className="mt-[29px]">
          <Heading n="6">
            <Fit w={676} className="block">Albert und Sonja als Kinder. Schreiben Sie Sätze im Perfekt. Wie haben das die Eltern gesehen?</Fit>
            <MarkLine />
          </Heading>
        </div>

        <div className={`ml-[34px] mt-[7px] flex text-[17.5px] leading-[24px] text-[#3a3a40] ${serif}`}>
          <span className="w-[20.5px]">a</span>
          <Fit w={180}>Albert hat/ist als Kind …</Fit>
        </div>
        <div className="ml-[54px] mt-[8px] flex h-[44px]">
          <div className="flex w-[536px] flex-col gap-[2px]">
            <div className="flex gap-[4px]">
              <Chip bg={245} pad={5} w={232} strike>mit dem Fahrrad zur Schule fahren</Chip>
              <Chip bg={262} pad={7} w={250}>oft seine Kleidung schmutzig machen</Chip>
            </div>
            <div className="flex gap-[3px]">
              <Chip bg={160} pad={5} w={146}>viel Schokolade essen</Chip>
              <Chip bg={338} pad={9} w={325}>mit den Freunden auf der Straße Fußball spielen</Chip>
            </div>
          </div>
          <div className={`-mt-[2px] flex ${hand}`}>
            <Fit w={9} className="italic">a</Fit>
            <div className="ml-[11px] h-[70px]">
              <Fit w={200} className="block">Albert ist als Kind mit dem</Fit>
              <div className="flex items-center">
                <Fit w={219}>Fahrrad zur Schule gefahren.</Fit>
                <Face mood="happy" className="ml-[5px]" />
              </div>
              <Fit w={32} className="mt-px">Er ...</Fit>
            </div>
          </div>
        </div>

        <div className={`ml-[34px] mt-[15px] flex text-[17.5px] leading-[24px] text-[#3a3a40] ${serif}`}>
          <span className="w-[20.5px]">b</span>
          <Fit w={175}>Sonja hat/ist als Kind …</Fit>
        </div>
        <div className="ml-[54px] mt-[9px] flex flex-col gap-[2px]">
          <div className="flex gap-[3px]">
            <Chip bg={356} pad={5} w={341}>den ganzen Samstag mit Freunden shoppen gehen</Chip>
            <Chip bg={117} pad={7} w={106}>nicht gut lernen</Chip>
          </div>
          <div className="flex gap-[3px]">
            <Chip bg={219} pad={5} w={205}>nach Mitternacht im Bett lesen</Chip>
            <Chip bg={217} pad={8} w={204}>oft zu spät zur Schule kommen</Chip>
          </div>
        </div>

        <div className="mt-[30px]">
          <Heading n="7">
            <Fit w={745} className="block">Was haben Sie als Kind gemacht? Schreiben Sie 5 persönliche Sätze. Wie haben das Ihre Eltern gesehen?</Fit>
            <MarkLine />
          </Heading>
        </div>
        <div className={`ml-[34px] mt-[8px] flex items-center ${hand}`}>
          <Fit w={145}>Ich habe als Kind ...</Fit>
          <Face mood="happy" className="ml-[5px]" />
        </div>

        <div className="-ml-[55px] mt-[22px] flex items-center">
          <div className={`mr-[19px] flex h-[18px] w-[36px] items-center justify-center bg-[#fad0c9] text-[15px] leading-none text-[#c4545c] ${serif}`}>A3</div>
          <Heading n="8">
            <Fit w={405}>Hören Sie die Gespräche. Was ist richtig? Kreuzen Sie an.</Fit>
          </Heading>
        </div>
        <div className={`-ml-[57px] mt-[6px] flex text-[17px] leading-[24px] text-[#3a3a40] ${serif}`}>
          <svg className="mt-px h-[10px] w-[7px]" viewBox="0 0 7 10"><path d="M0 0l7 5-7 5z" fill="#cf3d55" /></svg>
          <Fit w={31} className="-mt-px ml-[7px] text-[15px] text-[#cf3d55]">02–04</Fit>
          <Fit w={26} className="ml-[66px] font-semibold">Milli</Fit>
          <span className="ml-[86px] mt-[5px] size-[17px] border-2 border-[#bcd6cc]" />
          <Fit w={262} className="ml-[12px]">sich mit dem Abend eine Pause haben?</Fit>
          <span className="ml-[42px] mt-[5px] size-[17px] border-2 border-[#bcd6cc]" />
          <Fit w={165} className="ml-[6px]">die nach Abend die Zeit</Fit>
        </div>
      </div>

      {marks.map(([x, y, w, h, c], i) => (
        <span
          key={i}
          className={`absolute rounded-[9px] mix-blend-multiply ${c === "y" ? "bg-[#faf798]" : "bg-[#f7aaab]"}`}
          style={{ left: x, top: y, width: w, height: h }}
        />
      ))}
      {notes.map(([t, x, b, w]) => (
        <span
          key={t}
          className={`absolute text-[25.5px] leading-[28px] text-[#242426] ${arial}`}
          style={{ left: x, top: b - 23 }}
        >
          <Fit w={w}>{t}</Fit>
        </span>
      ))}
      <span className="absolute left-[936px] top-[689px] size-[60px] rounded-full border-[5px] border-[#b51c34]" />
      <svg className="absolute left-[903px] top-[466px] h-[23px] w-[14px]" viewBox="0 0 14 23">
        <path d="M1 1v17l4-4 3 8 2.500-1.200L7.500 13H13z" fill="#fff" stroke="#333" strokeWidth="1.100" />
      </svg>
    </div>
  );
}

/* ---------- shared application window ---------- */

function SharedApp() {
  return (
    <div className="relative h-[864px] w-[1517px] border-t border-[#2d4162] bg-[#fefefe] font-['Roboto',sans-serif]">
      <div className="flex h-[38px] items-center pb-[3px] pl-[9px]">
        <svg className="mb-[4px] h-[16px] w-[20px]" viewBox="0 0 20 16"><rect width="20" height="13" fill="#d8112c" /><path d="M2 9.500h3M7 9.500h4M13 9.500h4" stroke="#f6a8b2" strokeWidth="1.500" /><path d="M5 15h3M10 15h2M14 15h3" stroke="#d8112c" strokeWidth="2" /></svg>
        <Fit w={84} className="ml-[6px] font-['Open_Sans',sans-serif] text-[15px] text-[#333]">HUEBER-App</Fit>
        <svg className="ml-[1255px] h-[13px] w-[122px]" viewBox="0 0 122 13" fill="none" stroke="#1c1c1c" strokeWidth="1.500">
          <path d="M0 6.500h12M109 .5l12 12M121 .5l-12 12" /><rect x="54.500" y="1" width="11" height="11" />
        </svg>
      </div>
      <div className="flex h-[74px] items-stretch border-b-2 border-[#a3a3a5]">
        <div className="flex w-[245px] items-center pl-[29px]">
          <svg className="h-[16px] w-[22px]" viewBox="0 0 22 16"><path d="M0 1.500h22M0 8h22M0 14.500h22" stroke="#6b6b6d" strokeWidth="2.400" /></svg>
          <svg className="ml-[48px] h-[20px] w-[23px]" viewBox="0 0 23 20"><path d="M11.500 0L0 10.500h3V20h6v-6h5v6h6v-9.500h3l-4-3.700V1.500h-3V4z" fill="#69696b" /></svg>
          <Fit w={107} className="ml-[3px] text-[24px] text-[#727274]">Startseite</Fit>
        </div>
        <div className="-mb-[2px] flex w-[256px] items-center border-b-3 border-[#bd3553] pb-[3px] pl-[15px] text-[#cf4862]">
          <Fit w={192} className="text-[20px]">Motive A1 Arbeitsbuch</Fit>
          <svg className="ml-[12px] size-[13px]" viewBox="0 0 13 13"><path d="M1 1l11 11M12 1L1 12" stroke="currentColor" strokeWidth="1.800" /></svg>
        </div>
        <div className="ml-[653px] flex items-center pb-[4px]">
          <Fit w={44} className="text-[18px] text-[#8e8e90]">About</Fit>
          <svg className="ml-[14px] mt-[18px] h-[20px] w-[24px]" viewBox="0 0 24 20"><path d="M2.500 0Q2 18 23 17.500" fill="none" stroke="#e0694c" strokeWidth="3.500" /></svg>
          <div className="ml-[29px] mt-[2px] flex h-[48px] w-[169px] items-center bg-[#de0f2b] pl-[17px]">
            <Fit w={100} className="text-[30px] font-bold text-[#f0dfe4]">Hueber</Fit>
          </div>
        </div>
      </div>
      <div className="flex h-[48px] items-center border-b-2 border-[#c9c9cd] pb-[2px] text-[#1a68ac]">
        <svg className="ml-[22px] h-[19px] w-[5px]" viewBox="0 0 5 19" fill="currentColor"><circle cx="2.500" cy="2.500" r="2.400" /><circle cx="2.500" cy="9.500" r="2.400" /><circle cx="2.500" cy="16.500" r="2.400" /></svg>
        <MdFindInPage className="ml-[59px] size-[29px]" />
        <MdArrowUpward className="ml-[13px] size-[27px]" />
        <MdArrowDownward className="ml-[9px] size-[27px]" />
        <div className="mb-[2px] ml-[8px] flex h-[26px] w-[65px] items-center justify-end rounded-xs border border-[#9a9a9c] pr-[7px]">
          <Fit w={15} className="font-['Open_Sans',sans-serif] text-[15px] text-[#3a3a3c]">65</Fit>
        </div>
        <Fit w={73} className="mb-[3px] ml-[4px] font-['Open_Sans',sans-serif] text-[15px] text-[#3a3a3c]">(65 von 72)</Fit>
        <div className="ml-[231px] mt-[4px] flex w-[371px] items-center justify-between">
          <svg className="size-[26px]" viewBox="0 0 26 26" fill="currentColor"><path d="M22 1q4 0 3 5l-8 11-8-6 8-8q3-2 5-2zM8 12l8 6-4 4-3 0-3-2-1-3zM4 19l4 4-2 3H0z" /></svg>
          <MdInsertComment className="size-[28px]" />
          <svg className="size-[26px]" viewBox="0 0 24 24" fill="currentColor"><path d="M1 3v4h5v13h4V7h5V3zM23 9h-9v3.500h3V20h3.500v-7.500H23z" /></svg>
          <svg className="size-[27px]" viewBox="0 0 27 27" fill="none" stroke="currentColor" strokeWidth="2"><rect x="1.500" y="1.500" width="4.500" height="4.500" /><rect x="21" y="1.500" width="4.500" height="4.500" /><rect x="1.500" y="21" width="4.500" height="4.500" /><rect x="21" y="21" width="4.500" height="4.500" /><path d="M6 4h15M6 23.500h15M3.700 6v15M23.300 6v15M9.500 19l4-11 4 11M11 15.500h5" /></svg>
          <MdEdit className="size-[28px]" />
          <MdVisibilityOff className="size-[28px]" />
          <MdDeleteForever className="size-[28px]" />
        </div>
        <svg className="ml-[240px] h-[26px] w-[24px]" viewBox="0 0 24 26" fill="none" stroke="currentColor" strokeWidth="2.200"><path d="M8 2.500H2v21h6M12 0v26" /><path d="M15 2.500h8v21h-8" strokeDasharray="2 2.200" /></svg>
        <MdZoomOut className="ml-[16px] size-[27px]" />
        <MdZoomIn className="ml-[9px] size-[27px]" />
        <div className="mb-[3px] ml-[8px] flex h-[27px] w-[177px] items-center rounded-xs border border-[#9a9a9c] pl-[8px]">
          <Fit w={35} className="font-['Open_Sans',sans-serif] text-[15px] text-[#3a3a3c]">110%</Fit>
        </div>
        <MdFullscreen className="ml-[8px] size-[30px]" />
      </div>
      <div className="flex h-[703px] overflow-hidden bg-[#dcdcdd]">
        <div className="h-full w-[213px] shrink-0" />
        <div className="h-full w-[11px] shrink-0 bg-linear-to-r from-[#d8d8d9] to-[#9c9c9f]" />
        <WorkbookPage />
        <div className="h-full w-[9px] shrink-0 bg-linear-to-r from-[#a4a4a8] to-[#dadadb]" />
        <div className="h-full w-[214px] shrink-0" />
        <div className="flex h-full w-[21px] shrink-0 flex-col items-center bg-[#f1f1f3]">
          <svg className="mt-[6px] h-[6px] w-[9px]" viewBox="0 0 9 6"><path d="M0 6l4.500-6L9 6z" fill="#555" /></svg>
          <div className="mt-[582px] h-[21px] w-[16px] bg-[#c3c3c6]" />
          <svg className="mt-[74px] h-[6px] w-[9px]" viewBox="0 0 9 6"><path d="M0 0l4.500 6L9 0z" fill="#555" /></svg>
        </div>
      </div>
    </div>
  );
}

export default function App() {
  return (
    <div className="flex h-[1080px] w-[1920px] flex-col overflow-hidden bg-white font-['Noto_Sans',sans-serif]">
      {/* desktop panel */}
      <div className="flex h-[27px] shrink-0 items-center bg-linear-to-b from-[#57534b] to-[#45433d] pb-px text-[14px] font-semibold text-[#dcd9d3]">
        <Fit w={67} className="ml-[12px]">Activities</Fit>
        <ChromiumLogo className="ml-[21px] size-[15px]" />
        <Fit w={171} className="ml-[7px]">Chromium Web Browser</Fit>
        <svg className="ml-[7px] h-[5px] w-[9px]" viewBox="0 0 9 5"><path d="M0 0h9L4.500 5z" fill="#d0cdc6" /></svg>
        <Fit w={78} className="ml-[645px]">Di  9:42 AM</Fit>
        <span className="ml-[5px] size-[8px] rounded-full bg-[#d0cdc6]" />
        <MdBluetooth className="ml-[717px] size-[20px] text-[#c9c6bf]" />
        <MdWifi className="ml-[30px] size-[17px]" />
        <MdVolumeUp className="ml-[10px] size-[18px]" />
        <svg className="ml-[14px] h-[16px] w-[12px]" viewBox="0 0 12 16" fill="none" stroke="#d0cdc6" strokeWidth="1.800"><path d="M1 3h3V1h4v2h3v12H1zM3.500 8.500h5M3.500 11.500h5" /></svg>
        <svg className="ml-[13px] h-[5px] w-[9px]" viewBox="0 0 9 5"><path d="M0 0h9L4.500 5z" fill="#d0cdc6" /></svg>
      </div>
      <div className="flex">
        <Dock />
        <div className="flex w-[1853px] flex-col">
          <div className="flex h-[28px] items-center bg-linear-to-b from-[#3b3934] to-[#4c4a43] pb-px text-[14px] font-semibold text-[#dedbd2]">
            <Fit w={248} className="ml-[801px]">Meeting findet statt ... - Chromium</Fit>
            <svg className="ml-[743px] h-[16px] w-[56px]" viewBox="0 0 56 16" fill="none">
              <circle cx="8" cy="8" r="7.500" fill="#807d75" stroke="#33312c" /><circle cx="28" cy="8" r="7.500" fill="#807d75" stroke="#33312c" /><circle cx="48" cy="8" r="7.500" fill="#ee6236" stroke="#33312c" />
              <path d="M4.500 8.500h7M25 5.500h6v5h-6zM45 5l6 6M51 5l-6 6" stroke="#35332e" strokeWidth="1.300" />
            </svg>
          </div>
          <TabStrip />
          <AddressRow />
          <BookmarkBar />
          {/* meeting page */}
          <div className="relative flex h-[921px] bg-white">
            <div className="w-[107px] shrink-0 pl-[23px] pt-[18px]">
              <div className="flex size-[51px] items-center justify-center rounded-full border-2 border-[#ebebeb]">
                <MdInfoOutline className="size-[22px] text-black" />
              </div>
            </div>
            <div className="w-[1639px] shrink-0 bg-[#2b292c] pl-[61px]">
              <SharedApp />
            </div>
            <div className={`absolute left-[702px] top-[11px] flex h-[54px] w-[423px] items-center rounded-full border-2 border-[#ebebeb] bg-white pl-[14px] text-[20px] text-black ${arial}`}>
              <Fit w={383}>Anzeigen der Anwendung von Simone …</Fit>
            </div>
            <div className={`absolute left-[1418px] top-[57px] flex h-[42px] w-[360px] items-center rounded-sm bg-black/20 pl-[15px] text-[17px] text-white ${arial}`}>
              <svg className="h-[14px] w-[18px]" viewBox="0 0 18 14" fill="none" stroke="#fff" strokeWidth="1.600"><path d="M1 0v14M4 7h14M10 1L4 7l6 6" /></svg>
              <Fit w={259} className="ml-[27px] mt-px">Es spricht: Simone Durina-Sasdi</Fit>
            </div>
            <div className="absolute left-[891px] top-[822px] flex size-[78px] items-center justify-center rounded-full border-2 border-[#ef4a34] bg-[#ff4030]/13">
              <svg className="h-[31px] w-[25px]" viewBox="0 0 27 31" fill="none" stroke="#ef4a34" strokeWidth="1.500">
                <rect x="7" y="1" width="13" height="23" rx="6.500" /><path d="M13.500 24v6M9 30h9M1 26L26 1" />
              </svg>
            </div>
          </div>
        </div>
      </div>
    </div>
  );
}
